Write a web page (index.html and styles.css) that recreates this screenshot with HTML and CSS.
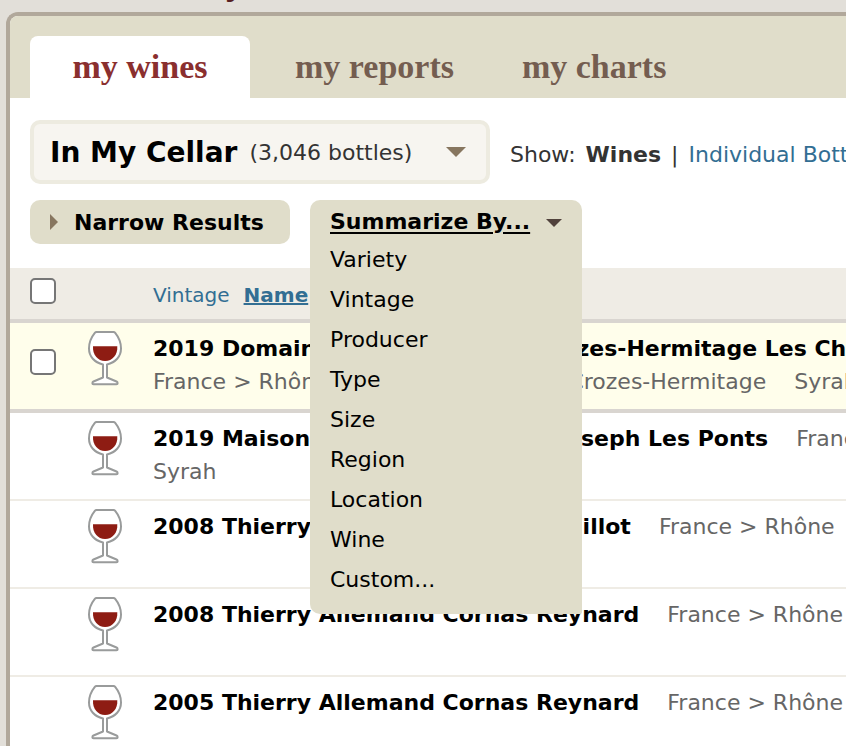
FILE: index.html
```html
<!DOCTYPE html>
<html lang="en">
<head>
<meta charset="utf-8">
<title>Wines</title>
<link rel="stylesheet" href="styles.css">
</head>
<body>
<svg class="defs" aria-hidden="true">
  <symbol id="glass" viewBox="0 0 38 56">
    <path d="M10.500 1h17q1 0 1.700.9C32.500 6 35 11 35 17.500c0 8-5.500 14-14 16V46.500l9.500 4c1.500.8 1.500 2.700 0 2.700h-23c-1.500 0-1.500-1.900 0-2.700l9.500-4V33.500c-8.500-2-14-8-14-16C3 11 5.500 6 8.800 1.900Q9.500 1 10.500 1z" fill="#fff" stroke="#999b9b" stroke-width="2" stroke-linejoin="round"/>
    <path d="M7 15.300h24.300C31.800 24 26.500 30 19.100 30S6.500 24 7 15.300z" fill="#8e1c13"/>
  </symbol>
</svg>
<header class="masthead"><span class="brand">y</span></header>
<main class="panel">
  <nav class="tabs">
    <a class="tab active" href="#wines">my wines</a>
    <a class="tab" href="#reports">my reports</a>
    <a class="tab" href="#charts">my charts</a>
  </nav>
  <div class="filters">
    <button class="scope" type="button"><strong>In My Cellar</strong><span class="count">(3,046 bottles)</span><span class="caret"></span></button>
    <p class="show"><span>Show:</span><strong>Wines</strong><span>|</span><a href="#bottles">Individual Bottles</a></p>
  </div>
  <div class="actions">
    <button class="narrow" type="button"><span class="arrow"></span>Narrow Results</button>
    <div class="summarize">
      <div class="menu">
        <button class="menu-title" type="button"><span class="label">Summarize By...</span><span class="caret small"></span></button>
        <a href="#variety">Variety</a>
        <a href="#vintage">Vintage</a>
        <a href="#producer">Producer</a>
        <a href="#type">Type</a>
        <a href="#size">Size</a>
        <a href="#region">Region</a>
        <a href="#location">Location</a>
        <a href="#wine">Wine</a>
        <a href="#custom">Custom...</a>
      </div>
    </div>
  </div>
  <table class="wines">
    <colgroup><col class="col-check"><col class="col-glass"><col></colgroup>
    <thead>
      <tr>
        <th><input type="checkbox" aria-label="Select all"></th>
        <th></th>
        <th class="sort"><a href="#vintage">Vintage</a><a class="current" href="#name">Name</a></th>
      </tr>
    </thead>
    <tbody>
      <tr class="selected">
        <td><input type="checkbox" aria-label="Select wine"></td>
        <td><svg class="glass"><use href="#glass"/></svg></td>
        <td class="wine"><strong>2019 Domaine des Remizières Crozes-Hermitage Les Chassis</strong><br><span class="origin">France &gt; Rhône &gt; Northern Rhône &gt; Crozes-Hermitage</span><span class="origin">Syrah</span></td>
      </tr>
      <tr>
        <td></td>
        <td><svg class="glass"><use href="#glass"/></svg></td>
        <td class="wine"><strong>2019 Maison Les Alexandrins St-Joseph Les Ponts</strong><span class="origin">France</span><br><span class="origin">Syrah</span></td>
      </tr>
      <tr>
        <td></td>
        <td><svg class="glass"><use href="#glass"/></svg></td>
        <td class="wine"><strong>2008 Thierry Allemand Cornas Chaillot</strong><span class="origin">France &gt; Rhône</span></td>
      </tr>
      <tr>
        <td></td>
        <td><svg class="glass"><use href="#glass"/></svg></td>
        <td class="wine"><strong>2008 Thierry Allemand Cornas Reynard</strong><span class="origin">France &gt; Rhône</span></td>
      </tr>
      <tr>
        <td></td>
        <td><svg class="glass"><use href="#glass"/></svg></td>
        <td class="wine"><strong>2005 Thierry Allemand Cornas Reynard</strong><span class="origin">France &gt; Rhône</span></td>
      </tr>
    </tbody>
  </table>
</main>
</body>
</html>
```
FILE: styles.css
```css
* { box-sizing: border-box; }
html { height: 100%; overflow: hidden; }
body {
  margin: 0;
  height: 100%;
  overflow: hidden;
  background: #e2dfd9;
  color: #333;
  font-family: Verdana, "DejaVu Sans", sans-serif;
  font-size: 22px;
}
a { color: #326e93; text-decoration: none; }
button { border: 0; font: inherit; color: #000; text-align: left; white-space: nowrap; }
.defs { position: absolute; width: 0; height: 0; }

.masthead { display: flex; align-items: flex-end; height: 12px; padding-left: 226px; overflow: hidden; }
.brand {
  color: #571f22;
  font: bold 40px/40px "Liberation Serif", serif;
  margin-bottom: 12px;
}

.panel {
  margin-left: 6px;
  min-height: 100%;
  border: 4px solid #b1a89b;
  border-right: 0;
  border-radius: 12px 0 0 0;
  background: #fff;
  overflow: hidden;
}

.tabs { display: flex; height: 82px; padding: 20px 20px 0; background: #e0ddca; }
.tab {
  padding: 0 31px 0 37px;
  color: #745d50;
  font: bold 34px/62px Georgia, "Liberation Serif", serif;
  white-space: nowrap;
}
.tab.active { flex: none; width: 220px; padding: 0; margin-right: 8px; text-align: center; border-radius: 8px 8px 0 0; background: #fff; color: #8a2f2f; }

.filters { display: flex; align-items: center; gap: 20px; padding: 22px 20px 0; }
.scope {
  display: flex;
  align-items: center;
  flex: none;
  width: 460px;
  height: 64px;
  padding: 0 20px 0 16px;
  border: 4px solid #edebe0;
  border-radius: 10px;
  background: #f7f5f0;
}
.scope strong { font-size: 28px; }
.count { margin-left: 12px; color: #333; }
.show { display: flex; gap: 10px; margin: 0; padding-top: 4px; white-space: nowrap; }
.caret { margin-left: auto; border: 10px solid transparent; border-top-color: #87765f; border-bottom: 0; }
.caret.small { border-width: 8px 8px 0; border-top-color: #51423c; margin: 4px 0 0 16px; }

.actions { display: flex; align-items: flex-start; gap: 20px; padding: 16px 20px 24px; }
.narrow {
  display: flex;
  align-items: center;
  gap: 16px;
  width: 260px;
  height: 44px;
  padding: 0 20px;
  border-radius: 10px;
  background: #e0ddca;
  font-weight: bold;
}
.arrow { border: 8px solid transparent; border-left-color: #87765f; border-right: 0; }
.summarize { position: relative; width: 272px; height: 44px; }
.menu {
  position: absolute;
  top: 0;
  left: 0;
  z-index: 1;
  width: 100%;
  padding-bottom: 14px;
  border-radius: 10px 10px 2px 10px;
  background: #e0ddca;
}
.menu a { display: block; padding-left: 20px; color: #000; line-height: 40px; }
.menu-title {
  display: flex;
  align-items: center;
  width: 100%;
  height: 40px;
  padding: 2px 0 0 20px;
  background: none;
  font-weight: bold;
}
.label { text-decoration: underline; text-decoration-thickness: 2px; text-underline-offset: 3px; }

.wines { width: 100%; table-layout: fixed; border-collapse: separate; border-spacing: 0; }
.col-check { width: 76px; }
.col-glass { width: 67px; }
th, td { padding: 0; vertical-align: top; text-align: left; white-space: nowrap; }
th { height: 55px; padding-top: 10px; border-bottom: 4px solid #d9d5d0; background: #efece5; font-weight: normal; }
th.sort { font-size: 20px; line-height: 34px; }
.sort a { margin-right: 14px; }
.current { font-weight: bold; text-decoration: underline; text-decoration-thickness: 2px; }
td { height: 88px; padding: 8px 0; border-bottom: 2px solid #efece5; line-height: 33px; }
.selected td { height: 90px; border-bottom: 4px solid #d9d5d0; background: #fffeeb; }
td.wine { padding: 9px 0 8px; }
td strong, .origin { margin-right: 28px; }
td strong { color: #000; }
.origin { color: #666; }
.glass { display: block; width: 38px; height: 56px; }
input {
  appearance: none;
  display: block;
  width: 26px;
  height: 26px;
  margin: 0 0 0 20px;
  border: 2px solid #767676;
  border-radius: 5px;
  background: #fff;
}
td input { margin-top: 18px; }
```
